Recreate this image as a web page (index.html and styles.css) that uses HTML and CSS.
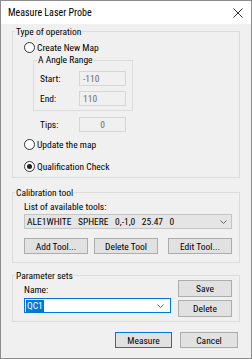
FILE: index.html
```html
<!DOCTYPE html>
<html>
<head>
<meta charset="utf-8">
<link rel="stylesheet" href="styles.css">
</head>
<body>
<div class="window">
  <div class="titlebar">
    <span class="title">Measure Laser Probe</span>
    <svg class="close" width="10" height="10" viewBox="0 0 10 10"><path d="M0.5 0.5 L9.5 9.5 M9.5 0.5 L0.5 9.5" stroke="#333" stroke-width="1" fill="none"/></svg>
  </div>
  <div class="body">
    <section class="group g-op">
      <div class="group-title">Type of operation</div>
      <div class="radio r-create"><span class="dot"></span>Create New Map</div>
      <div class="subgroup">
        <div class="group-title sub-title">A Angle Range</div>
        <div class="field f-start"><span class="flabel">Start:</span><span class="input">-110</span></div>
        <div class="field f-end"><span class="flabel">End:</span><span class="input">110</span></div>
      </div>
      <div class="field f-tips"><span class="flabel">Tips:</span><span class="input center">0</span></div>
      <div class="radio r-update"><span class="dot"></span>Update the map</div>
      <div class="radio r-qual checked"><span class="dot"></span>Qualification Check</div>
    </section>

    <section class="group g-cal">
      <div class="group-title">Calibration tool</div>
      <div class="list-label">List of available tools:</div>
      <div class="combo"><span>ALE1WHITE   SPHERE   0,-1,0   25.47   0</span><svg class="chev" width="7" height="4" viewBox="0 0 7 4"><path d="M0.5 0.5 L3.5 3.5 L6.5 0.5" stroke="#666" fill="none"/></svg></div>
      <div class="btn-row">
        <div class="btn b-add">Add Tool...</div>
        <div class="btn b-del">Delete Tool</div>
        <div class="btn b-edit">Edit Tool...</div>
      </div>
    </section>

    <section class="group g-ps">
      <div class="ps-left">
        <div class="group-title">Parameter sets</div>
        <div class="list-label">Name:</div>
        <div class="combo edit"><span class="sel">QC1</span><svg class="chev" width="7" height="4" viewBox="0 0 7 4"><path d="M0.5 0.5 L3.5 3.5 L6.5 0.5" stroke="#666" fill="none"/></svg></div>
      </div>
      <div class="ps-right">
        <div class="btn b-small">Save</div>
        <div class="btn b-small">Delete</div>
      </div>
    </section>

    <div class="footer">
      <div class="btn b-measure">Measure</div>
      <div class="btn b-cancel">Cancel</div>
    </div>
  </div>
</div>
</body>
</html>
```
FILE: styles.css
```css
* { box-sizing: border-box; }
html, body { margin: 0; padding: 0; }
body {
  font-family: "Roboto Condensed", "Liberation Sans", sans-serif;
  font-size: 9.5px;
  color: #000;
  background: #f0f0f0;
}
.window {
  width: 252px;
  height: 359px;
  border: 1px solid #8c8c8c;
  display: flex;
  flex-direction: column;
  background: #f0f0f0;
}
.titlebar {
  height: 23px;
  background: #fff;
  display: flex;
  align-items: center;
  justify-content: space-between;
  padding: 0 8px 0 7px;
  font-size: 10px;
}
.close { display: block; }
.body {
  flex: 1;
  padding: 7px 11px 0 11px;
}
.group { border: 1px solid #dcdcdc; }
.group-title {
  width: max-content;
  line-height: 14px;
  margin: -7px 0 0 2px;
  padding: 0 1px;
  background: #f0f0f0;
}
.radio {
  display: flex;
  align-items: center;
  height: 14px;
  margin-left: 11px;
}
.dot {
  width: 11px;
  height: 11px;
  border: 1px solid #333;
  border-radius: 50%;
  background: #fff;
  margin-right: 2px;
  display: flex;
  align-items: center;
  justify-content: center;
}
.checked .dot::after {
  content: "";
  width: 5px;
  height: 5px;
  border-radius: 50%;
  background: #222;
}
.r-create { margin-top: 1px; }
.subgroup {
  margin: 6px 0 0 20px;
  width: 100px;
  height: 51px;
  border: 1px solid #dcdcdc;
}
.sub-title { margin: -8px 0 0 3px; }
.field { display: flex; align-items: center; }
.flabel { width: 39px; line-height: 14px; }
.input {
  width: 47px;
  height: 15px;
  border: 1px solid #d6d6d6;
  color: #6d6d6d;
  padding-left: 3px;
  line-height: 13px;
}
.input.center { text-align: center; padding-left: 0; }
.f-start { margin: 4px 0 0 6px; }
.f-end { margin: 5px 0 0 6px; }
.f-tips { margin: 6px 0 0 27px; }
.r-update { margin-top: 5px; }
.r-qual { margin-top: 8px; }
.g-op { padding-bottom: 4px; }

.g-cal { margin-top: 14px; padding-bottom: 8px; }
.list-label { margin-left: 11px; line-height: 14px; }
.combo {
  margin-left: 11px;
  width: 208px;
  height: 15px;
  border: 1px solid #c4c4c4;
  background: #e5e5e5;
  display: flex;
  align-items: center;
  justify-content: space-between;
  padding: 0 4px 0 2px;
  white-space: pre;
}
.chev { display: block; }
.btn-row { display: flex; margin: 9px 0 0 11px; }
.btn {
  height: 16px;
  border: 1px solid #adadad;
  background: #e1e1e1;
  display: flex;
  align-items: center;
  justify-content: center;
}
.b-add, .b-del, .b-edit { width: 64px; }
.b-del { margin-left: 6px; }
.b-edit { margin-left: 10px; }

.g-ps {
  margin-top: 12px;
  display: flex;
  padding-bottom: 4px;
}
.ps-left { flex: 1; }
.combo.edit {
  margin-top: 1px;
  width: 147px;
  background: #fff;
  border-color: #0078d7;
  padding: 0 6px 0 1px;
}
.sel { background: #0078d7; color: #fff; padding: 0 1px; line-height: 12px; }
.ps-right {
  display: flex;
  flex-direction: column;
  gap: 3px;
  padding-top: 4px;
  margin-right: 7px;
}
.b-small { width: 54px; height: 17px; }

.footer {
  display: flex;
  justify-content: flex-end;
  gap: 8px;
  margin-top: 10px;
  padding-right: 2px;
}
.b-measure { width: 57px; border-color: #0078d7; }
.b-cancel { width: 58px; }
```
